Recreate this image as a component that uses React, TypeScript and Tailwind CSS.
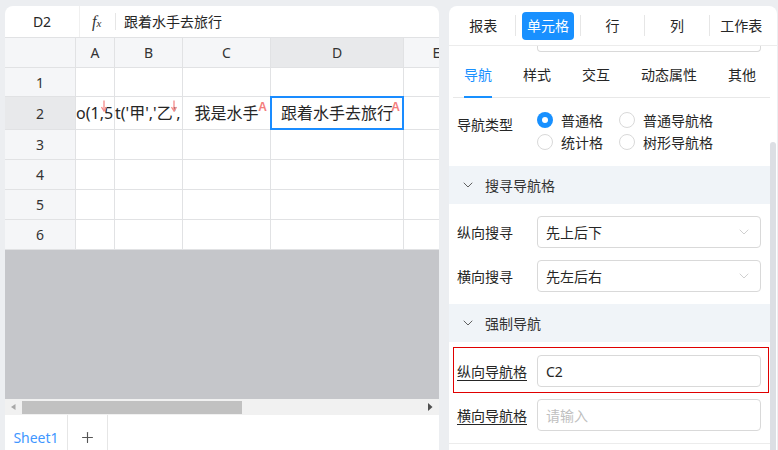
import { ChevronDown, Plus } from "lucide-react";

const font = "font-['Noto_Sans','Noto_Sans_CJK_SC',sans-serif]";

const columns = [
  { key: "A", w: "w-[39px]" },
  { key: "B", w: "w-[68px]" },
  { key: "C", w: "w-[88px]" },
  { key: "D", w: "w-[133px]" },
];

const rows = [
  { n: 1, h: "h-[29px]" },
  { n: 2, h: "h-[33px]" },
  { n: 3, h: "h-[30px]" },
  { n: 4, h: "h-[30px]" },
  { n: 5, h: "h-[30px]" },
  { n: 6, h: "h-[30px]" },
];

const topTabs = ["报表", "单元格", "行", "列", "工作表"];
const subTabs = ["导航", "样式", "交互", "动态属性", "其他"];

/** Little pink arrow that marks a cell expanding downwards. */
function DownMark({ right }: { right: string }) {
  return (
    <svg className={`absolute top-[3px] ${right}`} width="6" height="12" viewBox="0 0 6 12">
      <path d="M3 0.5V10" stroke="#f58a8a" strokeWidth="1.3" />
      <path d="M0.5 7L3 11L5.5 7" fill="none" stroke="#f58a8a" strokeWidth="1.3" />
    </svg>
  );
}

function SideMark() {
  return (
    <span className="absolute top-[4px] right-[3px] font-['Liberation_Sans',sans-serif] text-[12px] font-bold leading-none text-[#f47d7d]">
      A
    </span>
  );
}

function Grid() {
  return (
    <div className="flex flex-col">
      <div className="flex h-[30px] border-b border-[#e1e2e4] bg-[#f5f6f8] text-[14px] text-[#333]">
        <div className="w-[71px] border-r border-[#e1e2e4]" />
        {columns.map((c) => (
          <div
            key={c.key}
            className={`flex items-center justify-center border-r border-[#e1e2e4] ${c.w} ${c.key === "D" ? "bg-[#e8e9eb]" : ""}`}
          >
            {c.key}
          </div>
        ))}
        <div className="flex flex-1 items-center justify-center overflow-hidden pl-[30px]">E</div>
      </div>
      {rows.map((r) => (
        <div key={r.n} className={`flex border-b border-[#e1e2e4] ${r.h}`}>
          <div
            className={`flex w-[71px] items-center justify-center border-r border-[#e1e2e4] text-[14px] text-[#333] ${r.n === 2 ? "bg-[#e8e9eb]" : "bg-[#f5f6f8]"}`}
          >
            {r.n}
          </div>
          {columns.map((c) => (
            <div key={c.key} className={`relative flex items-center border-r border-[#e1e2e4] ${c.w}`}>
              {r.n === 2 && c.key === "A" ? (
                <>
                  <span className="overflow-hidden whitespace-nowrap text-[16px] text-[#262626]">o(1,5</span>
                  <DownMark right="right-[7px]" />
                </>
              ) : null}
              {r.n === 2 && c.key === "B" ? (
                <>
                  <span className="overflow-hidden whitespace-nowrap text-[16px] text-[#262626]">t('甲','乙',</span>
                  <DownMark right="right-[5px]" />
                </>
              ) : null}
              {r.n === 2 && c.key === "C" ? (
                <>
                  <span className="w-full text-center text-[16px] text-[#262626]">我是水手</span>
                  <SideMark />
                </>
              ) : null}
              {r.n === 2 && c.key === "D" ? (
                <>
                  <span className="w-full text-center text-[16px] text-[#262626]">跟着水手去旅行</span>
                  <SideMark />
                  <div className="absolute -top-px -left-px right-[-1px] bottom-[-1px] border-2 border-[#1a8cff]" />
                </>
              ) : null}
            </div>
          ))}
          <div className="flex-1" />
        </div>
      ))}
    </div>
  );
}

function SheetPanel() {
  return (
    <div className="flex w-[434px] flex-col overflow-hidden rounded-t-[8px] bg-white">
      <div className="flex h-[32px] shrink-0 items-center border-b border-[#e1e2e4] text-[14px] text-[#262626]">
        <div className="flex h-full w-[75px] items-center justify-center border-r border-[#f0f0f0]">D2</div>
        <span className="ml-[12px] w-[13px] font-['Liberation_Serif',serif] text-[16px] italic leading-none text-[#333]">
          f<span className="text-[11px]">x</span>
        </span>
        <div className="ml-[10px] h-[17px] w-px bg-[#e6e6e6]" />
        <span className="ml-[8px]">跟着水手去旅行</span>
      </div>
      <Grid />
      <div className="h-[149px] shrink-0 bg-[#c5c6ca]" />
      <div className="flex h-[16px] shrink-0 items-center bg-[#f1f1f1]">
        <svg className="ml-[6px]" width="5" height="6" viewBox="0 0 5 6">
          <path d="M4.5 0L0 3L4.5 6Z" fill="#a8a8a8" />
        </svg>
        <div className="ml-[6px] h-[13px] w-[220px] bg-[#c1c1c1]" />
        <div className="flex-1" />
        <svg className="mr-[6px]" width="5" height="8" viewBox="0 0 5 8">
          <path d="M0 0L4.5 4L0 8Z" fill="#505050" />
        </svg>
      </div>
      <div className="flex h-[44px] shrink-0 bg-white">
        <div className="flex w-[63px] items-center justify-center border-r border-[#e6e6e6] text-[14px] text-[#3f97ff]">
          Sheet1
        </div>
        <div className="flex w-[40px] items-center justify-center border-r border-[#e6e6e6]">
          <Plus size={17} strokeWidth={1.6} color="#555" />
        </div>
      </div>
    </div>
  );
}

function Radio({ checked, label }: { checked?: boolean; label: string }) {
  return (
    <div className="flex h-[22px] items-center gap-[8px]">
      {checked ? (
        <span className="flex h-[16px] w-[16px] items-center justify-center rounded-full bg-[#1890ff]">
          <span className="h-[6px] w-[6px] rounded-full bg-white" />
        </span>
      ) : (
        <span className="h-[16px] w-[16px] rounded-full border border-[#d9d9d9] bg-white" />
      )}
      <span className="text-[14px] text-[#262626]">{label}</span>
    </div>
  );
}

function SectionHeader({ title }: { title: string }) {
  return (
    <div className="flex h-[38px] items-center bg-[#f0f4f8] pl-[11px] text-[14px] text-[#333]">
      <ChevronDown size={16} strokeWidth={1.4} color="#555" />
      <span className="ml-[9px]">{title}</span>
    </div>
  );
}

function SelectRow({ label, value }: { label: string; value: string }) {
  return (
    <div className="flex items-center pr-[9px] pl-[8px]">
      <span className="w-[80px] text-[14px] text-[#262626]">{label}</span>
      <div className="flex h-[32px] flex-1 items-center justify-between rounded-[4px] border border-[#d9d9d9] pr-[8px] pl-[8px] text-[14px] text-[#262626]">
        <span>{value}</span>
        <ChevronDown size={16} strokeWidth={1.1} color="#bfbfbf" />
      </div>
    </div>
  );
}

function InputRow({ label, value, placeholder }: { label: string; value?: string; placeholder?: string }) {
  return (
    <div className="flex items-center">
      <span className="w-[80px]">
        <span className="inline-block border-b border-[#262626] text-[14px] leading-[17px] text-[#262626]">{label}</span>
      </span>
      <div className="flex h-[32px] flex-1 items-center rounded-[4px] border border-[#d9d9d9] pl-[8px] text-[14px]">
        {value ? <span className="text-[#262626]">{value}</span> : <span className="text-[#bfbfbf]">{placeholder}</span>}
      </div>
    </div>
  );
}

function PropsPanel() {
  return (
    <div className="flex w-[328px] flex-col overflow-hidden rounded-t-[8px] bg-white">
      <div className="grid h-[40px] shrink-0 grid-cols-5 border-b border-[#ececec] pr-[4px] pl-[2px] text-[14px] text-[#262626]">
        {topTabs.map((t, i) => (
          <div key={t} className="flex items-center">
            {i > 0 ? <div className="h-[21px] w-px bg-[#e6e6e6]" /> : null}
            {t === "单元格" ? (
              <div className="mx-[6px] flex h-[28px] flex-1 items-center justify-center rounded-[4px] bg-[#1890ff] text-white">
                {t}
              </div>
            ) : (
              <div className="flex flex-1 items-center justify-center">{t}</div>
            )}
          </div>
        ))}
      </div>
      <div className="flex flex-1">
        <div className="flex w-[321px] flex-col">
          <div className="mr-[9px] ml-[88px] h-[6px] rounded-b-[4px] border border-t-0 border-[#d9d9d9]" />
          <div className="ml-[4px] flex h-[46px] gap-[31px] border-b border-[#e8e8e8] pl-[11px] text-[14px]">
            {subTabs.map((t) => (
              <div
                key={t}
                className={`-mb-px flex items-center border-b-2 pt-[1px] ${t === "导航" ? "border-[#1890ff] text-[#1890ff]" : "border-transparent text-[#262626]"}`}
              >
                {t}
              </div>
            ))}
          </div>
          <div className="flex pt-[11px] pb-[13px] pl-[8px]">
            <span className="mt-[5px] w-[80px] text-[14px] leading-[22px] text-[#262626]">导航类型</span>
            <div className="grid grid-cols-[82px_auto]">
              <Radio checked label="普通格" />
              <Radio label="普通导航格" />
              <Radio label="统计格" />
              <Radio label="树形导航格" />
            </div>
          </div>
          <SectionHeader title="搜寻导航格" />
          <div className="flex flex-col gap-[12px] py-[12px]">
            <SelectRow label="纵向搜寻" value="先上后下" />
            <SelectRow label="横向搜寻" value="先左后右" />
          </div>
          <SectionHeader title="强制导航" />
          <div className="flex flex-col border-b border-[#ececec] pt-[5px] pb-[12px]">
            <div className="mr-[1px] ml-[4px] border border-[#e00000] pt-[7px] pr-[7px] pb-[5px] pl-[3px]">
              <InputRow label="纵向导航格" value="C2" />
            </div>
            <div className="mt-[6px] pr-[9px] pl-[8px]">
              <InputRow label="横向导航格" placeholder="请输入" />
            </div>
          </div>
        </div>
        <div className="w-[7px] pt-[96px]">
          <div className="h-[320px] w-[6px] rounded-t-[3px] bg-[#dcdfe4]" />
        </div>
      </div>
    </div>
  );
}

export default function App() {
  return (
    <div className={`flex h-[450px] w-[778px] gap-[10px] overflow-hidden bg-[#eceef1] pt-[6px] pl-[5px] ${font}`}>
      <SheetPanel />
      <PropsPanel />
    </div>
  );
}
